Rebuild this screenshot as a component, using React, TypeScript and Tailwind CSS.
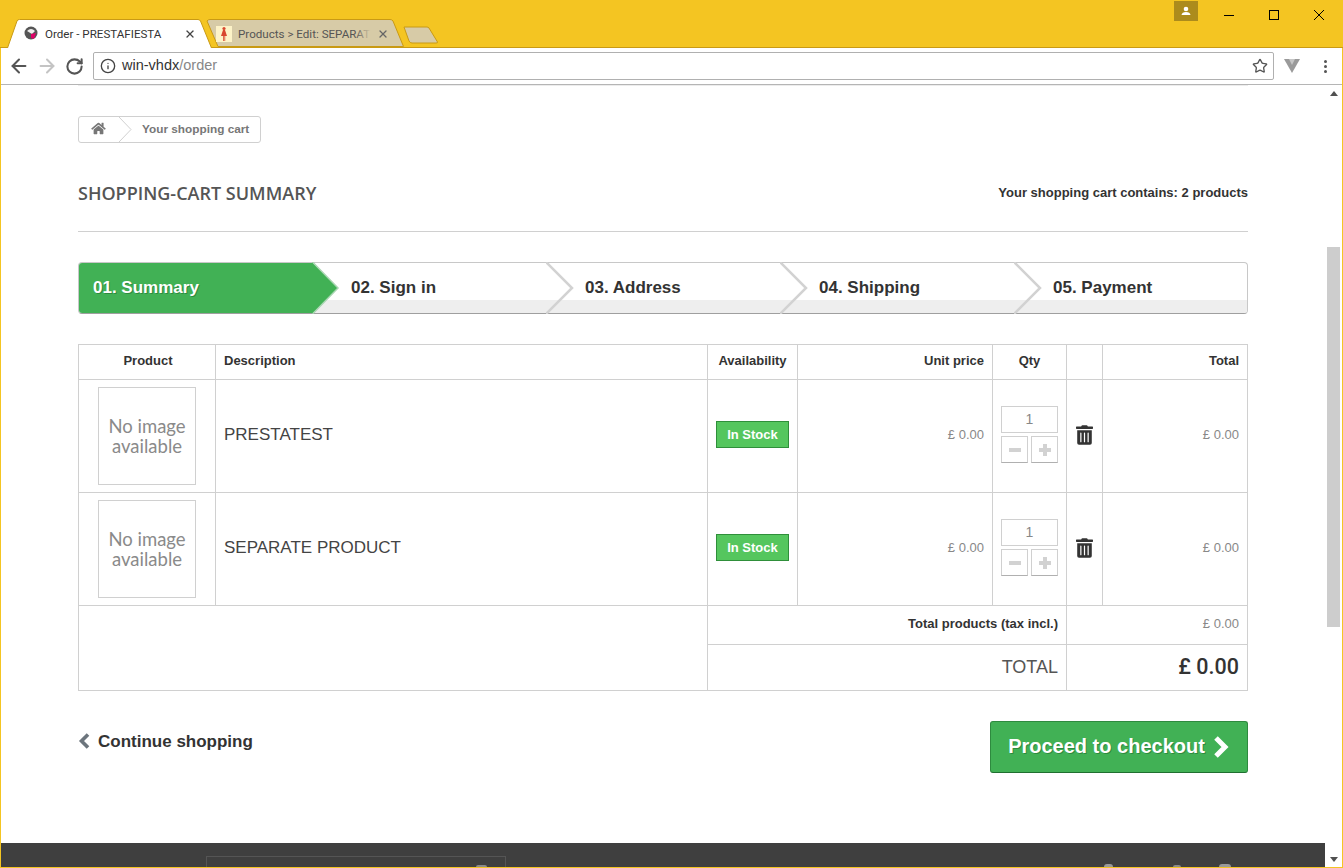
import React from 'react';
import { ArrowLeft, ArrowRight, RotateCw, Info, Star, X } from 'lucide-react';
import { FaHome, FaTrashAlt } from 'react-icons/fa';

const steps = ['01. Summary', '02. Sign in', '03. Address', '04. Shipping', '05. Payment'];

const rows = ['PRESTATEST', 'SEPARATE PRODUCT'];

const td = 'border border-[#d0d0d0] align-middle';
const price = 'text-right pr-[8px] pb-[2px] text-[13px] text-[#888]';

function StepArrow({ active }: { active: boolean }) {
  return (
    <svg className="absolute -right-[27px] top-[-1px] z-10" width="28" height="52" viewBox="0 0 28 52" fill="none">
      {active ? (
        <>
          <path d="M0 0 L26 26 L0 52 Z" fill="#41b155" />
          <path d="M0.5 0 L26 26 L0.5 52" stroke="#a9d6b2" strokeWidth="1.5" />
        </>
      ) : (
        <>
          <path d="M0 1 L26 26 L0 51 Z" fill="#ffffff" />
          <path d="M0 38 L13 38 L0 51 Z" fill="#eeeeee" />
          <path d="M0 0 L26 26 L0 52" stroke="#d2d2d2" strokeWidth="2.5" />
        </>
      )}
    </svg>
  );
}

export default function App() {
  return (
    <div className="w-[1343px] h-[868px] overflow-hidden flex flex-col bg-[#f4c522] font-['Liberation_Sans',sans-serif]">
      {/* Chrome title bar */}
      <div className="h-[48px] shrink-0 relative flex items-end pl-[7px] border-b border-[#c99a14]">
        <div className="relative z-10 w-[205px] h-[28px]">
          <svg className="absolute inset-0" width="205" height="29" viewBox="0 0 205 29" fill="none">
            <path d="M0.5 29 L10 2 Q10.5 0.5 12.5 0.5 H191 Q192.5 0.5 193.5 2 L204.5 29 Z" fill="#ffffff" />
            <path d="M0.5 29 L10 2 Q10.5 0.5 12.5 0.5 H191 Q192.5 0.5 193.5 2 L204.5 29" stroke="#c99a14" />
          </svg>
          <svg className="absolute left-[17px] top-[7px]" width="14" height="14" viewBox="0 0 14 14">
            <circle cx="7" cy="7" r="6.5" fill="#555" />
            <path d="M3 5 Q7 1 11 5 L8 8 Z" fill="#eee" />
            <path d="M7 8 L12 7 L10 13 L7 12 Z" fill="#df0067" />
          </svg>
          <span className="absolute left-[38px] top-[8px] text-[11.6px] leading-[15px] text-[#333] font-['Roboto',sans-serif] whitespace-nowrap">Order - PRESTAFIESTA</span>
          <X className="absolute left-[177px] top-[9px] w-[12px] h-[12px] text-[#444]" strokeWidth={2.6} />
        </div>
        <div className="relative -ml-[7px] w-[199px] h-[28px]">
          <svg className="absolute inset-0" width="199" height="28" viewBox="0 0 199 28" fill="none">
            <path d="M2 2 Q3 0.5 5 0.5 H185 Q187 0.5 188 2 L198.5 27.5 H13 Z" fill="#d7cba7" stroke="#c99a14" />
          </svg>
          <div className="absolute left-[11px] top-[7px] w-[16px] h-[16px] bg-[#fdf3c8] flex justify-center">
            <svg width="8" height="16" viewBox="0 0 8 16">
              <circle cx="4" cy="2.5" r="1.6" fill="#d8472f" />
              <path d="M3 4 H5 L7 10 H1 Z M3 10 H3.8 V15 H3 Z M4.4 10 H5.2 V15 H4.4 Z" fill="#d8472f" />
            </svg>
          </div>
          <span className="absolute left-[33px] top-[8px] text-[11.6px] leading-[15px] text-[#555] font-['Roboto',sans-serif] whitespace-nowrap">Products &gt; Edit: SEPARAT</span>
          <div className="absolute left-[150px] top-[8px] w-[16px] h-[15px] bg-gradient-to-r from-transparent to-[#d7cba7]" />
          <X className="absolute left-[172px] top-[9px] w-[12px] h-[12px] text-[#666]" strokeWidth={2.6} />
        </div>
        <svg className="-ml-[1px] mb-[3px]" width="36" height="18" viewBox="0 0 36 18" fill="none">
          <path d="M1 1 H24 Q25 1 26 2 L34.5 16 Q35 17 33 17 H9 Q7 17 6 15 Z" fill="#d7cba7" stroke="#c99a14" />
        </svg>
        {/* window controls */}
        <div className="absolute right-[2px] top-0 flex items-start">
          <div className="w-[24px] h-[20px] mr-[8px] mt-[1px] bg-[#ac8b1c] flex items-center justify-center">
            <svg width="12" height="10" viewBox="0 0 12 10" fill="#fff">
              <circle cx="6" cy="3" r="2.3" />
              <path d="M1.5 9 Q2 6 6 6 Q10 6 10.5 9 Z" />
            </svg>
          </div>
          <div className="w-[45px] h-[30px] flex items-center justify-center">
            <div className="w-[10px] h-[1px] bg-black" />
          </div>
          <div className="w-[45px] h-[30px] flex items-center justify-center">
            <div className="w-[10px] h-[10px] border border-black" />
          </div>
          <div className="w-[45px] h-[30px] flex items-center justify-center">
            <svg width="10" height="10" viewBox="0 0 10 10" stroke="#000" strokeWidth="1"><path d="M0 0 L10 10 M10 0 L0 10" /></svg>
          </div>
        </div>
      </div>

      {/* Toolbar */}
      <div className="h-[37px] shrink-0 mx-[1px] bg-white flex items-center border-b border-[#b5b5b5]">
        <ArrowLeft className="ml-[7px] w-[22px] h-[22px] text-[#555]" strokeWidth={2.2} />
        <ArrowRight className="ml-[6px] w-[22px] h-[22px] text-[#c4c4c4]" strokeWidth={2.2} />
        <RotateCw className="ml-[7px] w-[19px] h-[19px] text-[#555]" strokeWidth={2.6} />
        <div className="ml-[9px] w-[1181px] h-[28px] rounded-[2px] border border-[#b0b0b0] flex items-center pl-[6px] pr-[5px]">
          <Info className="w-[16px] h-[16px] text-[#444]" strokeWidth={2} />
          <span className="ml-[6px] text-[14.5px] text-[#333]">win-vhdx<span className="text-[#888]">/order</span></span>
          <Star className="ml-auto w-[16px] h-[16px] text-[#555]" strokeWidth={2} />
        </div>
        <svg className="ml-[10px]" width="16" height="14" viewBox="0 0 16 14">
          <path d="M0 0 H16 L8 14 Z" fill="#9a9a9a" />
          <path d="M5 0 H11 L8 6 Z" fill="#c6c6c6" />
        </svg>
        <div className="ml-[24px] flex flex-col gap-[2px]">
          <div className="w-[3px] h-[3px] rounded-full bg-[#555]" />
          <div className="w-[3px] h-[3px] rounded-full bg-[#555]" />
          <div className="w-[3px] h-[3px] rounded-full bg-[#555]" />
        </div>
      </div>

      {/* Page viewport */}
      <div className="flex-1 min-h-0 mx-[1px] mb-[1px] bg-white flex">
        <div className="flex-1 min-w-0 flex flex-col">
          <div className="flex-1 min-h-0 pl-[77px] pr-[77px]">
            <div className="h-[1px] bg-[#ececec]" />
            {/* Breadcrumb */}
            <div className="mt-[30px] w-[183px] h-[27px] border border-[#d0d0d0] rounded-[3px] relative flex items-center overflow-hidden">
              <FaHome className="ml-[12px] -mt-[2px] w-[15px] h-[13px] text-[#777]" />
              <svg className="absolute left-[40px] top-0" width="14" height="25" viewBox="0 0 14 25" fill="none">
                <path d="M0 0 L12 12.5 L0 25" stroke="#d0d0d0" />
              </svg>
              <span className="ml-[36px] text-[11.8px] font-bold text-[#777]">Your shopping cart</span>
            </div>

            {/* Heading */}
            <div className="mt-[38px] h-[51px] flex justify-between items-start border-b border-[#d0d0d0]">
              <h1 className="text-[18px] leading-[25px] font-semibold text-[#555] font-['Open_Sans',sans-serif]">SHOPPING-CART SUMMARY</h1>
              <span className="text-[13px] leading-[24px] font-bold text-[#333]">Your shopping cart contains: 2 products</span>
            </div>

            {/* Steps */}
            <div className="mt-[30px] h-[52px] flex rounded-[4px] border border-[#c8c8c8] border-b-[#9f9f9f] relative">
              {steps.map((s, i) => (
                <div key={s} className={`relative flex items-center ${i === 0 ? 'bg-[#41b155] rounded-l-[3px] text-white [text-shadow:1px_1px_0_#2e8a3f]' : 'text-[#333]'} ${i === 4 ? 'flex-1' : 'w-[234px]'}`}>
                  {i > 0 && <div className={`absolute left-0 right-0 bottom-0 h-[13px] bg-[#eeeeee] ${i === 4 ? 'rounded-br-[3px]' : ''}`} />}
                  <span className={`relative z-20 text-[17px] font-bold ${i === 0 ? 'ml-[14px]' : 'ml-[38px]'}`}>{s}</span>
                  {i < 4 && <StepArrow active={i === 0} />}
                </div>
              ))}
            </div>

            {/* Cart table */}
            <table className="mt-[30px] w-[1169px] table-fixed border-collapse text-[13px] text-[#333]">
              <colgroup>
                <col className="w-[137px]" />
                <col className="w-[492px]" />
                <col className="w-[90px]" />
                <col className="w-[195px]" />
                <col className="w-[74px]" />
                <col className="w-[36px]" />
                <col className="w-[145px]" />
              </colgroup>
              <thead>
                <tr className="h-[35px] font-bold">
                  <th className={`${td} text-center pl-[2px] pb-[2px] font-bold`}>Product</th>
                  <th className={`${td} text-left pl-[8px] pb-[2px] font-bold`}>Description</th>
                  <th className={`${td} text-center pb-[2px] font-bold`}>Availability</th>
                  <th className={`${td} text-right pr-[8px] pb-[2px] font-bold`}>Unit price</th>
                  <th className={`${td} text-center pb-[2px] font-bold`}>Qty</th>
                  <th className={td} />
                  <th className={`${td} text-right pr-[8px] pb-[2px] font-bold`}>Total</th>
                </tr>
              </thead>
              <tbody>
                {rows.map((name) => (
                  <tr key={name} className="h-[113px]">
                    <td className={td}>
                      <div className="ml-[19px] w-[98px] h-[98px] border border-[#d0d0d0] flex items-center justify-center text-center text-[18.5px] leading-[20px] text-[#8a8a8a] font-['Lato',sans-serif]">
                        <span>No image<br />available</span>
                      </div>
                    </td>
                    <td className={`${td} pl-[8px] pb-[2px] text-[17px] text-[#444]`}>{name}</td>
                    <td className={`${td} text-center pb-[3px]`}>
                      <span className="block ml-[8px] w-[73px] h-[27px] leading-[25px] border border-[#2f8f3a] bg-[#55c65e] text-white font-bold text-[13px]">In Stock</span>
                    </td>
                    <td className={`${td} ${price}`}>£ 0.00</td>
                    <td className={`${td} pb-[3px]`}>
                      <div className="ml-[8px] w-[57px] flex flex-col gap-[3px]">
                        <div className="h-[27px] border border-[#d0d0d0] text-center leading-[25px] text-[#888] text-[14px]">1</div>
                        <div className="flex justify-between">
                          <div className="w-[27px] h-[27px] border border-[#d0d0d0] border-b-[#b0b0b0] flex items-center justify-center">
                            <svg width="12" height="12" viewBox="0 0 12 12" fill="#d2d2d2"><rect x="0" y="4" width="12" height="4" /></svg>
                          </div>
                          <div className="w-[27px] h-[27px] border border-[#d0d0d0] border-b-[#b0b0b0] flex items-center justify-center">
                            <svg width="12" height="12" viewBox="0 0 12 12" fill="#d2d2d2"><path d="M4 0 H8 V4 H12 V8 H8 V12 H4 V8 H0 V4 H4 Z" /></svg>
                          </div>
                        </div>
                      </div>
                    </td>
                    <td className={`${td} pb-[3px]`}>
                      <FaTrashAlt className="ml-[9px] w-[17px] h-[20px] text-[#333]" />
                    </td>
                    <td className={`${td} ${price}`}>£ 0.00</td>
                  </tr>
                ))}
                <tr className="h-[39px]">
                  <td className={td} colSpan={2} rowSpan={2} />
                  <td className={`${td} text-right pr-[8px] pb-[2px] font-bold`} colSpan={3}>Total products (tax incl.)</td>
                  <td className={`${td} ${price}`} colSpan={2}>£ 0.00</td>
                </tr>
                <tr className="h-[46px]">
                  <td className={`${td} text-right pr-[8px] text-[18px] text-[#555]`} colSpan={3}>TOTAL</td>
                  <td className={`${td} text-right pr-[8px] text-[21.5px] font-medium text-[#333] font-['Roboto',sans-serif]`} colSpan={2}>£ 0.00</td>
                </tr>
              </tbody>
            </table>

            {/* Actions */}
            <div className="mt-[30px] flex justify-between items-start">
              <div className="mt-[8px] flex items-center">
                <svg className="mt-[-1px]" width="12" height="16" viewBox="0 0 12 16" fill="none" stroke="#6c757d" strokeWidth="3.6">
                  <path d="M10 1.5 L3.5 8 L10 14.5" />
                </svg>
                <span className="ml-[8px] text-[17px] font-bold text-[#333]">Continue shopping</span>
              </div>
              <div className="w-[258px] h-[52px] pb-[2px] rounded-[3px] border border-[#2e8a3f] border-b-[#1f6f30] bg-[#41b155] flex items-center justify-center text-white">
                <span className="text-[20px] font-bold [text-shadow:1px_1px_0_#2e8a3f]">Proceed to checkout</span>
                <svg className="ml-[8px] mt-[2px]" width="17" height="22" viewBox="0 0 17 22" fill="none" stroke="#ffffff" strokeWidth="5">
                  <path d="M3 2 L12 11 L3 20" />
                </svg>
              </div>
            </div>
          </div>

          {/* Footer */}
          <div className="h-[24px] shrink-0 bg-[#3f3f3f] pl-[205px] pt-[13px] flex items-end">
            <div className="w-[300px] h-[11px] border border-[#555] border-b-0 flex items-end justify-end pr-[18px]">
              <div className="w-[11px] h-[2px] rounded-t-full bg-[#8a8a8a]" />
            </div>
            <div className="ml-[598px] w-[9px] h-[3px] rounded-t-full bg-[#9a9a9a]" />
            <div className="ml-[60px] w-[8px] h-[2px] rounded-t-full bg-[#8a8a8a]" />
            <div className="ml-[38px] w-[12px] h-[3px] rounded-t-full bg-[#9a9a9a]" />
          </div>
        </div>

        {/* Scrollbar */}
        <div className="w-[17px] shrink-0 bg-white flex flex-col items-center">
          <svg className="mt-[6px]" width="8" height="5" viewBox="0 0 8 5"><path d="M0 5 L4 0 L8 5 Z" fill="#505050" /></svg>
          <div className="mt-[151px] w-[13px] h-[380px] bg-[#cdcdcd]" />
          <svg className="mt-auto mb-[5px]" width="8" height="5" viewBox="0 0 8 5"><path d="M0 0 L4 5 L8 0 Z" fill="#505050" /></svg>
        </div>
      </div>
    </div>
  );
}
